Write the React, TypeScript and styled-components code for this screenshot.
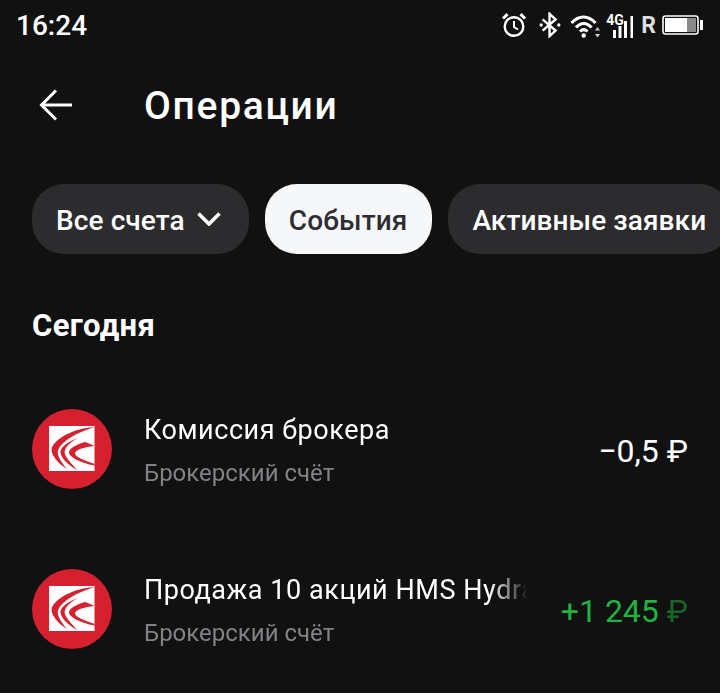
import * as React from "react";
import styled, { createGlobalStyle } from "styled-components";

const GlobalStyle = createGlobalStyle`
  html, body {
    margin: 0;
    padding: 0;
    background: #111112;
  }
  body {
    font-family: Roboto, "Liberation Sans", sans-serif;
    color: #fff;
  }
`;

const operations = [
  {
    title: "Комиссия брокера",
    account: "Брокерский счёт",
    amount: "−0,5",
    positive: false,
  },
  {
    title: "Продажа 10 акций HMS Hydraulic Machines",
    account: "Брокерский счёт",
    amount: "+1 245",
    positive: true,
  },
];

export default function App() {
  return (
    <>
      <GlobalStyle />
      <Page>
        <StatusBar>
          <Clock>16:24</Clock>
          <StatusIcons>
            <AlarmIcon />
            <BluetoothIcon />
            <WifiIcon />
            <SignalIcon />
            <Roaming>R</Roaming>
            <BatteryIcon />
          </StatusIcons>
        </StatusBar>
        <Header>
          <BackButton>
            <svg width="34" height="32" viewBox="0 0 34 32" fill="none" stroke="#fff" strokeWidth="3">
              <path d="M33 16H3" />
              <path d="M17 1.5 2.5 16 17 30.5" />
            </svg>
          </BackButton>
          <Title>Операции</Title>
        </Header>
        <Chips>
          <Chip>
            Все счета
            <ChevronIcon />
          </Chip>
          <Chip $active>События</Chip>
          <Chip>Активные заявки</Chip>
        </Chips>
        <SectionTitle>Сегодня</SectionTitle>
        <List>
          {operations.map((op) => (
            <Row key={op.title}>
              <BrandLogo />
              <RowText>
                <RowTitle>{op.title}</RowTitle>
                <RowAccount>{op.account}</RowAccount>
              </RowText>
              <Amount $positive={op.positive}>
                {op.amount} <Currency $positive={op.positive}>₽</Currency>
              </Amount>
            </Row>
          ))}
        </List>
      </Page>
    </>
  );
}

function ChevronIcon() {
  return (
    <Chevron width="24" height="14" viewBox="0 0 24 14" fill="none" stroke="#fff" strokeWidth="3.6">
      <path d="M1.5 1.5 12 12 22.5 1.5" />
    </Chevron>
  );
}

function BrandLogo() {
  return (
    <svg width="80" height="80" viewBox="0 0 80 80">
      <circle cx="40" cy="40" r="40" fill="#d5202f" />
      <path d="M17 17H62.5V62H17Z" fill="#fff" />
      <path
        d="M62.5 18C46 19 27 26 20 38C17.5 44 25 54 35 60C30 54 24.5 47 26 41.5C29.5 32 45 23.5 62.5 18Z"
        fill="#d5202f"
      />
      <path
        d="M46 29C38 32 29.5 37 28.5 42C27.5 48 36 56 45 61C40 55 32.5 48 32.5 43C33.5 37 39 33 46 29Z"
        fill="#d5202f"
      />
      <path
        d="M53 33C46 35 37.5 39 37 43C36.5 48 49 54 62.5 56.5V55C54 52 43 48 43 44.5C43 41 52 38 62.5 37C59 35 56 34 53 33Z"
        fill="#d5202f"
      />
    </svg>
  );
}

function AlarmIcon() {
  return (
    <svg width="26" height="26" viewBox="0 0 26 26" fill="none" stroke="#fff">
      <circle cx="13" cy="14.5" r="9.3" strokeWidth="2.4" />
      <path d="M13 9v6l4 2.5" strokeWidth="2" />
      <path d="M2 6.5 6.5 2.2M24 6.5 19.5 2.2" strokeWidth="3" />
    </svg>
  );
}

function BluetoothIcon() {
  return (
    <BluetoothSvg width="24" height="26" viewBox="0 0 24 28" fill="none" stroke="#fff" strokeWidth="2.6">
      <path d="M4 8 18 20 11.5 26V2L18 8 4 20" />
      <circle cx="2.5" cy="14" r="1.8" fill="#fff" stroke="none" />
      <circle cx="21.5" cy="14" r="1.8" fill="#fff" stroke="none" />
    </BluetoothSvg>
  );
}

function WifiIcon() {
  return (
    <WifiSvg width="32" height="24" viewBox="0 0 32 24" fill="none" stroke="#fff" strokeWidth="3">
      <path d="M1.5 9C9 1 18 1 25.5 9" />
      <path d="M6 13.5C10.5 8 17 8 21.5 13.5" />
      <path d="M10 17.5C12.5 15 15 15 17.5 17.5" />
      <circle cx="13.7" cy="21.5" r="2.2" fill="#fff" stroke="none" />
      <path d="M27.5 13 30 16.5H25ZM27.5 23.5 25 20H30Z" fill="#fff" stroke="none" opacity="0.8" />
    </WifiSvg>
  );
}

function SignalIcon() {
  return (
    <SignalBox>
      <NetworkLabel>4G</NetworkLabel>
      <svg width="21" height="22" viewBox="0 0 21 22" fill="#fff">
        <rect x="0" y="14" width="3" height="8" />
        <rect x="5.5" y="10" width="3" height="12" />
        <rect x="11" y="5" width="3" height="17" />
        <rect x="17.5" y="0" width="2.5" height="22" />
      </svg>
    </SignalBox>
  );
}

function BatteryIcon() {
  return (
    <BatterySvg width="41" height="20" viewBox="0 0 41 20">
      <rect x="1" y="1" width="35" height="18" rx="2.5" fill="none" stroke="#fff" strokeWidth="1.6" />
      <rect x="3" y="3" width="22" height="14" fill="#fff" />
      <rect x="25" y="3" width="9" height="14" fill="#8a8a8a" />
      <rect x="38" y="5" width="3" height="10" fill="#fff" />
    </BatterySvg>
  );
}

const Page = styled.div`
  width: 720px;
  height: 693px;
  overflow: hidden;
  background: #111112;
`;

const StatusBar = styled.div`
  display: flex;
  align-items: center;
  justify-content: space-between;
  height: 50px;
  padding: 0 17px 0 16px;
`;

const Clock = styled.span`
  font-size: 28px;
  font-weight: 500;
`;

const StatusIcons = styled.div`
  display: flex;
  align-items: center;
`;

const BluetoothSvg = styled.svg`
  margin-left: 11px;
`;

const WifiSvg = styled.svg`
  margin-left: 8px;
  margin-top: 2px;
`;

const SignalBox = styled.div`
  position: relative;
  display: flex;
  align-items: flex-end;
  justify-content: flex-end;
  width: 30px;
  height: 24px;
  margin-left: 2px;
  margin-top: 2px;
`;

const NetworkLabel = styled.span`
  position: absolute;
  left: 2px;
  top: -1px;
  font-size: 14px;
  font-weight: 700;
  line-height: 15px;
`;

const Roaming = styled.span`
  margin-left: 7px;
  font-size: 23px;
  font-weight: 700;
  color: #dedede;
`;

const BatterySvg = styled.svg`
  margin-left: 6px;
`;

const Header = styled.div`
  display: flex;
  align-items: center;
  height: 110px;
  padding-left: 39px;
`;

const BackButton = styled.div`
  display: flex;
  width: 105px;
`;

const Title = styled.h1`
  margin: 2px 0 0;
  font-size: 39px;
  font-weight: 500;
  letter-spacing: 1.7px;
`;

const Chips = styled.div`
  display: flex;
  gap: 16px;
  margin-top: 24px;
  padding-left: 32px;
`;

const Chip = styled.div<{ $active?: boolean }>`
  box-sizing: border-box;
  display: flex;
  flex: none;
  align-items: center;
  gap: 12px;
  height: 70px;
  padding: 2px 25px 0 24px;
  border-radius: 32px;
  font-size: 28px;
  font-weight: 500;
  letter-spacing: 0.1px;
  background: ${(p) => (p.$active ? "#f6f7f8" : "#2c2c2e")};
  color: ${(p) => (p.$active ? "#2e2e32" : "#fff")};
`;

const Chevron = styled.svg`
  margin-right: 3px;
  margin-bottom: 2px;
`;

const SectionTitle = styled.h2`
  margin: 54px 0 0 32px;
  font-size: 31px;
  line-height: 36px;
  font-weight: 700;
  letter-spacing: 0.4px;
`;

const List = styled.div`
  margin-top: 25px;
`;

const Row = styled.div`
  display: flex;
  align-items: center;
  height: 160px;
  padding: 0 32px;
`;

const RowText = styled.div`
  width: 384px;
  margin-left: 32px;
  overflow: hidden;
  -webkit-mask-image: linear-gradient(to right, #000 90%, transparent 100%);
  mask-image: linear-gradient(to right, #000 90%, transparent 100%);
`;

const RowTitle = styled.div`
  font-size: 27px;
  line-height: 36px;
  white-space: nowrap;
  letter-spacing: 0.55px;
`;

const RowAccount = styled.div`
  margin-top: 11px;
  font-size: 24px;
  line-height: 28px;
  color: #808286;
`;

const Amount = styled.div<{ $positive: boolean }>`
  flex: 1;
  padding-top: 3px;
  text-align: right;
  font-size: 32px;
  white-space: nowrap;
  color: ${(p) => (p.$positive ? "#1fb43f" : "#fff")};
`;

const Currency = styled.span<{ $positive: boolean }>`
  opacity: ${(p) => (p.$positive ? 0.5 : 1)};
`;
